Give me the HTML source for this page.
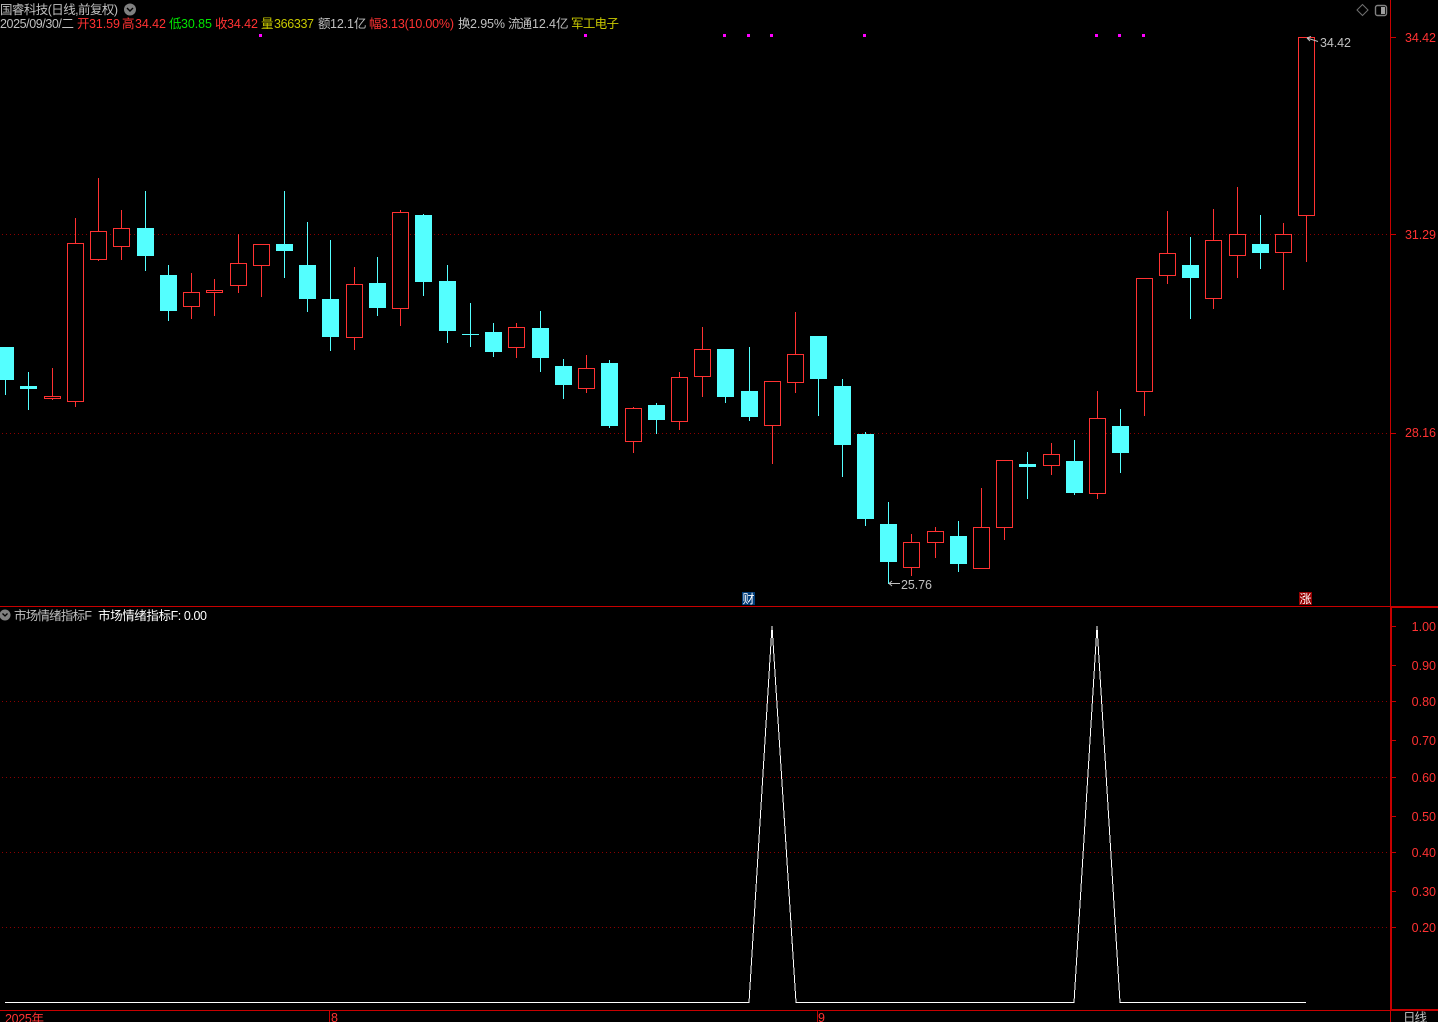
<!DOCTYPE html>
<html><head><meta charset="utf-8">
<style>
html,body{margin:0;padding:0;background:#000;width:1438px;height:1022px;overflow:hidden}
svg{display:block;position:absolute;left:0;top:0}
text{font-family:"Liberation Sans","WenQuanYi Zen Hei","Noto Sans CJK SC",sans-serif;font-size:12.5px;white-space:pre}
.g{fill:#c0c0c0}.r{fill:#ff3232}.n{fill:#00e600}.y{fill:#c8c800}.w{fill:#fff}
</style></head><body>
<svg width="1438" height="1022" viewBox="0 0 1438 1022" xmlns="http://www.w3.org/2000/svg">
<defs><pattern id="dot" x="0" y="0" width="4" height="1" patternUnits="userSpaceOnUse"><rect x="2" y="0" width="1" height="1" fill="#8c0000" shape-rendering="crispEdges"/></pattern></defs>
<rect width="1438" height="1022" fill="#000"/>
<g shape-rendering="crispEdges">
<!-- grid -->
<rect x="0" y="234" width="1390" height="1" fill="url(#dot)"/>
<rect x="0" y="433" width="1390" height="1" fill="url(#dot)"/>
<rect x="0" y="701" width="1390" height="1" fill="url(#dot)"/>
<rect x="0" y="777" width="1390" height="1" fill="url(#dot)"/>
<rect x="0" y="852" width="1390" height="1" fill="url(#dot)"/>
<rect x="0" y="927" width="1390" height="1" fill="url(#dot)"/>
<!-- magenta marks -->
<path fill="#ff00ff" d="M259 34h3v3h-3zM584 34h3v3h-3zM723 34h3v3h-3zM747 34h3v3h-3zM770 34h3v3h-3zM863 34h3v3h-3zM1095 34h3v3h-3zM1118 34h3v3h-3zM1142 34h3v3h-3z"/>
<!-- wicks -->
<path fill="none" stroke="#ff3232" stroke-width="1" d="M52.5 368V400M75.5 218V407M98.5 178V261M121.5 210V260M191.5 273V319M214.5 279V316M238.5 234V293M261.5 244V297M354.5 267V350M400.5 210V326M516.5 323V358M586.5 355V393M633.5 407V453M679.5 372V430M702.5 327V397M772.5 381V464M795.5 312V393M911.5 534V576M935.5 527V558M981.5 488V569M1004.5 460V540M1051.5 443V475M1097.5 391V499M1144.5 278V416M1167.5 211V284M1213.5 209V309M1237.5 187V278M1283.5 223V290M1306.5 37V262"/>
<path fill="none" stroke="#54ffff" stroke-width="1" d="M5.5 380V395M28.5 372V410M145.5 191V271M168.5 265V321M284.5 191V278M307.5 222V312M330.5 240V351M377.5 257V316M423.5 214V296M447.5 265V343M470.5 303V347M493.5 323V357M540.5 311V372M563.5 359V399M609.5 360V428M656.5 403V434M725.5 397V403M749.5 347V421M818.5 379V416M842.5 379V477M865.5 432V526M888.5 502V584M958.5 521V572M1027.5 452V499M1074.5 440V495M1120.5 409V473M1190.5 237V319M1260.5 215V269"/>
<!-- red bodies -->
<path fill="#000" stroke="#ff3232" stroke-width="1" d="M44.5 396.5h16v2h-16zM67.5 243.5h16v158h-16zM90.5 231.5h16v28h-16zM113.5 228.5h16v18h-16zM183.5 292.5h16v14h-16zM206.5 290.5h16v2h-16zM230.5 263.5h16v22h-16zM253.5 244.5h16v21h-16zM346.5 284.5h16v53h-16zM392.5 212.5h16v96h-16zM508.5 327.5h16v20h-16zM578.5 368.5h16v20h-16zM625.5 408.5h16v33h-16zM671.5 377.5h16v44h-16zM694.5 349.5h16v27h-16zM764.5 381.5h16v44h-16zM787.5 354.5h16v28h-16zM903.5 542.5h16v25h-16zM927.5 531.5h16v11h-16zM973.5 527.5h16v41h-16zM996.5 460.5h16v67h-16zM1043.5 454.5h16v11h-16zM1089.5 418.5h16v75h-16zM1136.5 278.5h16v113h-16zM1159.5 253.5h16v22h-16zM1205.5 240.5h16v58h-16zM1229.5 234.5h16v21h-16zM1275.5 234.5h16v18h-16zM1298.5 37.5h16v178h-16z"/>
<!-- cyan bodies -->
<path fill="#54ffff" d="M-3 347h17V380h-17zM20 386h17V389h-17zM137 228h17V256h-17zM160 275h17V311h-17zM276 244h17V251h-17zM299 265h17V299h-17zM322 299h17V337h-17zM369 283h17V308h-17zM415 215h17V282h-17zM439 281h17V331h-17zM462 334h17V335h-17zM485 332h17V352h-17zM532 328h17V358h-17zM555 366h17V385h-17zM601 363h17V426h-17zM648 405h17V420h-17zM717 349h17V397h-17zM741 391h17V417h-17zM810 336h17V379h-17zM834 386h17V445h-17zM857 434h17V519h-17zM880 524h17V562h-17zM950 536h17V564h-17zM1019 464h17V467h-17zM1066 461h17V493h-17zM1112 426h17V453h-17zM1182 265h17V278h-17zM1252 244h17V253h-17z"/>
<!-- frame -->
<rect x="1390" y="0" width="1" height="606" fill="#c80000"/>
<rect x="1390" y="606" width="2" height="404" fill="#c80000"/>
<rect x="1390" y="1010" width="1" height="12" fill="#c80000"/>
<rect x="0" y="606" width="1390" height="1" fill="#c80000"/>
<rect x="1390" y="606" width="48" height="2" fill="#c80000"/>
<rect x="0" y="1010" width="1390" height="1" fill="#c80000"/>
<rect x="1390" y="1009" width="48" height="2" fill="#c80000"/>
<rect x="329" y="1010" width="1" height="12" fill="#c80000"/>
<rect x="817" y="1010" width="1" height="12" fill="#c80000"/>
<!-- axis ticks -->
<path stroke="#c80000" stroke-width="1" d="M1391 37.5h5M1391 234.5h5M1391 433.5h5M1392 626.5h4M1392 665.5h4M1392 701.5h4M1392 740.5h4M1392 777.5h4M1392 816.5h4M1392 852.5h4M1392 891.5h4M1392 927.5h4"/>
<!-- flags -->
<rect x="742" y="592" width="13" height="13" fill="#003c78"/>
<rect x="1299" y="592" width="13" height="13" fill="#960000"/>
<!-- white line -->
<path d="M5 1002.5H749L772 626L796 1002.5H1074L1097 626L1120 1002.5H1306" fill="none" stroke="#fff" stroke-width="1"/>
</g>
<!-- header row 1 -->
<text class="g" x="0" y="14" textLength="118" lengthAdjust="spacing">国睿科技(日线,前复权)</text>
<circle cx="130" cy="9.5" r="6" fill="#808080"/>
<path d="M127 8l3 3 3-3" fill="none" stroke="#000" stroke-width="1.4"/>
<!-- header row 2 -->
<text class="g" x="0" y="28" textLength="74" lengthAdjust="spacing">2025/09/30/二</text>
<text class="r" x="77" y="28">开</text><text class="r" x="89" y="28" textLength="31" lengthAdjust="spacing">31.59</text>
<text class="r" x="122" y="28">高</text><text class="r" x="135" y="28" textLength="31" lengthAdjust="spacing">34.42</text>
<text class="n" x="169" y="28">低</text><text class="n" x="181" y="28" textLength="31" lengthAdjust="spacing">30.85</text>
<text class="r" x="215" y="28">收</text><text class="r" x="227" y="28" textLength="31" lengthAdjust="spacing">34.42</text>
<text class="y" x="261" y="28">量</text><text class="y" x="274" y="28" textLength="40" lengthAdjust="spacing">366337</text>
<text class="g" x="318" y="28">额</text><text class="g" x="330" y="28" textLength="24" lengthAdjust="spacing">12.1</text><text class="g" x="354" y="28">亿</text>
<text class="r" x="369" y="28">幅</text><text class="r" x="381" y="28" textLength="73" lengthAdjust="spacing">3.13(10.00%)</text>
<text class="g" x="458" y="28">换</text><text class="g" x="470" y="28" textLength="35" lengthAdjust="spacing">2.95%</text>
<text class="g" x="508" y="28" textLength="24" lengthAdjust="spacing">流通</text><text class="g" x="532" y="28" textLength="24" lengthAdjust="spacing">12.4</text><text class="g" x="556" y="28">亿</text>
<text class="y" x="571" y="28" textLength="48" lengthAdjust="spacing">军工电子</text>
<!-- top right icons -->
<path d="M1362.5 4.5l5.5 5.5-5.5 5.5-5.5-5.5z" fill="none" stroke="#707070" stroke-width="1"/>
<rect x="1375.5" y="5.5" width="11" height="10" rx="2" fill="none" stroke="#808080" stroke-width="1.4"/>
<rect x="1381" y="7" width="4" height="7" fill="#a0a0a0"/>
<!-- y labels -->
<g text-anchor="end">
<text class="r" x="1436" y="42" textLength="31" lengthAdjust="spacing">34.42</text>
<text class="r" x="1436" y="239" textLength="31" lengthAdjust="spacing">31.29</text>
<text class="r" x="1436" y="437" textLength="31" lengthAdjust="spacing">28.16</text>
<text class="r" x="1436" y="631">1.00</text>
<text class="r" x="1436" y="670">0.90</text>
<text class="r" x="1436" y="706">0.80</text>
<text class="r" x="1436" y="745">0.70</text>
<text class="r" x="1436" y="782">0.60</text>
<text class="r" x="1436" y="821">0.50</text>
<text class="r" x="1436" y="857">0.40</text>
<text class="r" x="1436" y="896">0.30</text>
<text class="r" x="1436" y="932">0.20</text>
</g>
<!-- high/low labels -->
<path d="M1307 38l11 3.5M1307 38l4-1.5M1307 38l3 3" fill="none" stroke="#c0c0c0" stroke-width="1"/>
<text class="g" x="1320" y="47" textLength="31" lengthAdjust="spacing">34.42</text>
<path d="M889 583.5h11M889 583.5l3-2.5M889 583.5l3 2.5" fill="none" stroke="#c0c0c0" stroke-width="1"/>
<text class="g" x="901" y="589" textLength="31" lengthAdjust="spacing">25.76</text>
<!-- flag text -->
<text class="w" x="742.5" y="603" style="font-size:12px">财</text>
<text class="w" x="1299.5" y="603" style="font-size:12px">涨</text>
<!-- sub header -->
<circle cx="5" cy="615" r="5.5" fill="#808080"/>
<path d="M2.5 613.5l2.5 2.5 2.5-2.5" fill="none" stroke="#000" stroke-width="1.3"/>
<text class="g" x="14" y="620" textLength="78" lengthAdjust="spacing">市场情绪指标F</text>
<text class="w" x="98" y="620" textLength="109" lengthAdjust="spacing">市场情绪指标F: 0.00</text>
<!-- bottom axis -->
<text class="r" x="5" y="1023" textLength="39" lengthAdjust="spacing">2025年</text>
<text class="r" x="331" y="1022">8</text>
<text class="r" x="818" y="1022">9</text>
<text class="g" x="1403" y="1022" textLength="24" lengthAdjust="spacing">日线</text>
</svg>
</body></html>
